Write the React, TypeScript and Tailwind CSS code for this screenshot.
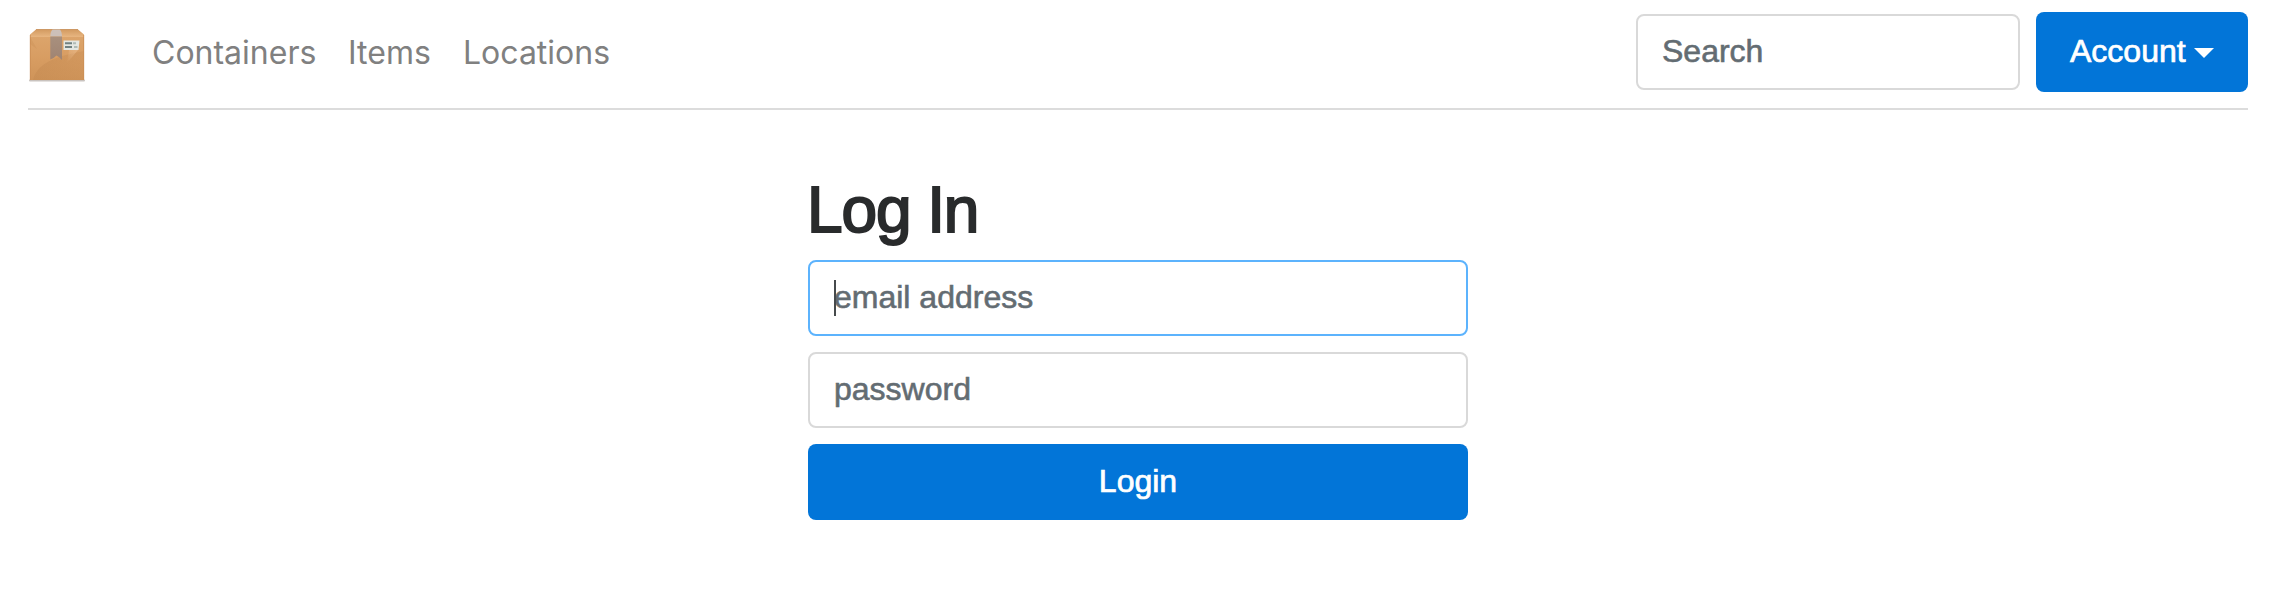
import React from 'react';

const inputBase =
  'block h-[76px] w-full rounded-lg border-2 bg-white pl-6 pr-6 pt-0 pb-[2px] text-[32px] text-[#464a4c] outline-none placeholder:text-[#636c72] placeholder:opacity-100 [-webkit-text-stroke:0.6px_#636c72]';

function BoxLogo() {
  return (
    <svg viewBox="0 0 60 56" className="block h-[56px] w-[60px]" aria-label="Box">
      <defs>
        <linearGradient id="front" x1="0" y1="0" x2="0" y2="1">
          <stop offset="0" stopColor="#dca56c" />
          <stop offset="0.5" stopColor="#d89d62" />
          <stop offset="1" stopColor="#cf9459" />
        </linearGradient>
        <linearGradient id="shade" x1="0" y1="0" x2="1" y2="1">
          <stop offset="0" stopColor="#a8703c" stopOpacity="0.28" />
          <stop offset="1" stopColor="#bd824b" stopOpacity="0.08" />
        </linearGradient>
        <linearGradient id="glint" x1="1" y1="0" x2="0" y2="1">
          <stop offset="0" stopColor="#edbf91" stopOpacity="0.6" />
          <stop offset="1" stopColor="#edbf91" stopOpacity="0" />
        </linearGradient>
        <linearGradient id="top" x1="0" y1="0" x2="0" y2="1">
          <stop offset="0" stopColor="#d29a60" />
          <stop offset="1" stopColor="#e8b681" />
        </linearGradient>
        <linearGradient id="tape" x1="0" y1="0" x2="0" y2="1">
          <stop offset="0" stopColor="#a8907e" />
          <stop offset="1" stopColor="#a08472" />
        </linearGradient>
      </defs>
      <rect x="1" y="51.5" width="56" height="2" rx="1" fill="#c9c3bf" />
      <path d="M2 7H56V52H2Z" fill="url(#front)" />
      <path d="M5 52C8 38 22 29 56 23V52H5Z" fill="url(#shade)" />
      <path d="M2 9L9 21L2 16Z" fill="#bd8048" opacity="0.2" />
      <path d="M50 22L39 35L41 22Z" fill="url(#glint)" />
      <path d="M2 6.5L8 1.5H50L56 6.5V9H2Z" fill="url(#top)" />
      <path d="M8 1.5H50" stroke="#c58a50" strokeWidth="0.8" />
      <path d="M22.3 8.5C22.4 5 23 3 24.5 1.5H32C33.3 3 33.9 5 34 8.5Z" fill="#ccc0b9" />
      <path d="M22.3 8.5H34V32L31.5 29.5L28.5 27.5L25.5 30L22.3 31.5Z" fill="url(#tape)" />
      <path d="M2.3 7V52M55.7 7V52" stroke="#c98d54" strokeWidth="0.8" />
      <path d="M35.5 12.5H51.5L50.5 22H35.5Z" fill="#e4e7e2" />
      <path d="M37 15.2H44M37 19H44" stroke="#708181" strokeWidth="2" />
      <path d="M45 15.2H48M46 19H49.5" stroke="#afbbb6" strokeWidth="2" />
    </svg>
  );
}

export default function App() {
  return (
    <div className="h-[612px] w-full bg-white pl-[28px] pr-[34px] font-['Liberation_Sans',Arial,sans-serif] text-[#292b2c]">
      <header className="flex h-[110px] items-start border-b-2 border-[#dcdcdc]">
        <a href="#" className="mt-[28px] shrink-0">
          <BoxLogo />
        </a>
        <nav className="ml-[64px] mt-[29px] flex gap-[31px] font-['Inter',sans-serif] text-[32px] leading-[48px] text-[#808080]">
          <a href="#" className="w-[165px] whitespace-nowrap">Containers</a>
          <a href="#" className="w-[84px] whitespace-nowrap">Items</a>
          <a href="#" className="whitespace-nowrap">Locations</a>
        </nav>
        <div className="ml-auto flex items-start gap-4">
          <div className="mt-[14px] w-[384px]">
            <input type="text" placeholder="Search" className={`${inputBase} border-[#d9d9d9]`} />
          </div>
          <button className="mt-[12px] flex h-[80px] w-[212px] items-center rounded-lg bg-[#0275d8] pb-[2px] pl-[34px] text-[32px] text-white [-webkit-text-stroke:0.7px_white]">
            Account
            <svg viewBox="0 0 20 10" className="ml-[8px] mt-[4px] h-[10px] w-[20px]" fill="white">
              <path d="M0 0H20L10 10Z" />
            </svg>
          </button>
        </div>
      </header>
      <main className="mx-auto w-[660px] pt-[65px]">
        <h1 className="-ml-px h-[85px] text-[64px] leading-[70px] tracking-[-1.1px] [-webkit-text-stroke:2px_#292b2c]">Log In</h1>
        <form className="flex flex-col gap-4">
          <div className="relative">
            <input type="email" placeholder="email address" className={`${inputBase} border-[#5cb3fd]`} />
            <span className="absolute left-[26px] top-[20px] h-[36px] w-[2px] bg-[#464a4c]" />
          </div>
          <input type="password" placeholder="password" className={`${inputBase} border-[#d9d9d9]`} />
          <button
            type="button"
            className="flex h-[76px] w-full items-center justify-center rounded-lg bg-[#0275d8] pb-[2px] text-[32px] text-white [-webkit-text-stroke:0.7px_white]"
          >
            Login
          </button>
        </form>
      </main>
    </div>
  );
}
